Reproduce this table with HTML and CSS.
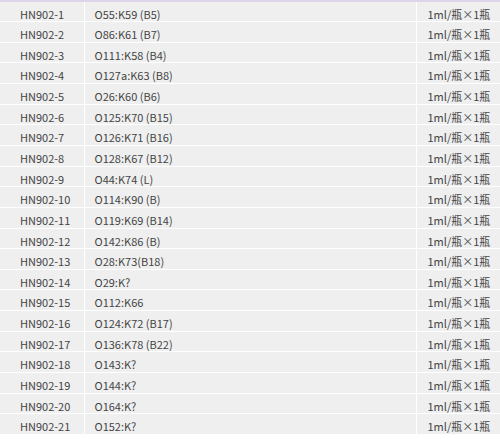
FILE: index.html
```html
<!DOCTYPE html>
<html lang="zh-CN">
<head>
    <meta charset="UTF-8">
    <meta name="viewport" content="width=device-width, initial-scale=1.0">
    <title>HN902 血清</title>
    <link rel="stylesheet" href="styles.css">
</head>
<body>
    <table class="serum-table">
        <colgroup>
            <col class="col-code">
            <col class="col-type">
            <col class="col-spec">
        </colgroup>
        <tbody>
            <tr><td>HN902-1</td><td>O55:K59 (B5)</td><td class="spec">1ml/瓶×1瓶</td></tr>
            <tr><td>HN902-2</td><td>O86:K61 (B7)</td><td class="spec">1ml/瓶×1瓶</td></tr>
            <tr><td>HN902-3</td><td>O111:K58 (B4)</td><td class="spec">1ml/瓶×1瓶</td></tr>
            <tr><td>HN902-4</td><td>O127a:K63 (B8)</td><td class="spec">1ml/瓶×1瓶</td></tr>
            <tr><td>HN902-5</td><td>O26:K60 (B6)</td><td class="spec">1ml/瓶×1瓶</td></tr>
            <tr><td>HN902-6</td><td>O125:K70 (B15)</td><td class="spec">1ml/瓶×1瓶</td></tr>
            <tr><td>HN902-7</td><td>O126:K71 (B16)</td><td class="spec">1ml/瓶×1瓶</td></tr>
            <tr><td>HN902-8</td><td>O128:K67 (B12)</td><td class="spec">1ml/瓶×1瓶</td></tr>
            <tr><td>HN902-9</td><td>O44:K74 (L)</td><td class="spec">1ml/瓶×1瓶</td></tr>
            <tr><td>HN902-10</td><td>O114:K90 (B)</td><td class="spec">1ml/瓶×1瓶</td></tr>
            <tr><td>HN902-11</td><td>O119:K69 (B14)</td><td class="spec">1ml/瓶×1瓶</td></tr>
            <tr><td>HN902-12</td><td>O142:K86 (B)</td><td class="spec">1ml/瓶×1瓶</td></tr>
            <tr><td>HN902-13</td><td>O28:K73(B18)</td><td class="spec">1ml/瓶×1瓶</td></tr>
            <tr><td>HN902-14</td><td>O29:K?</td><td class="spec">1ml/瓶×1瓶</td></tr>
            <tr><td>HN902-15</td><td>O112:K66</td><td class="spec">1ml/瓶×1瓶</td></tr>
            <tr><td>HN902-16</td><td>O124:K72 (B17)</td><td class="spec">1ml/瓶×1瓶</td></tr>
            <tr><td>HN902-17</td><td>O136:K78 (B22)</td><td class="spec">1ml/瓶×1瓶</td></tr>
            <tr><td>HN902-18</td><td>O143:K?</td><td class="spec">1ml/瓶×1瓶</td></tr>
            <tr><td>HN902-19</td><td>O144:K?</td><td class="spec">1ml/瓶×1瓶</td></tr>
            <tr><td>HN902-20</td><td>O164:K?</td><td class="spec">1ml/瓶×1瓶</td></tr>
            <tr><td>HN902-21</td><td>O152:K?</td><td class="spec">1ml/瓶×1瓶</td></tr>
        </tbody>
    </table>
</body>
</html>
```

FILE: styles.css
```css
body {
    margin: 0;
    background: #ffffff;
    font-family: "Noto Sans CJK SC", "Noto Sans", sans-serif;
    font-size: 11px;
    color: #444444;
}

.serum-table {
    width: 500px;
    border-collapse: collapse;
    table-layout: fixed;
    border-top: 2px solid #dcd5ea;
}

.col-code {
    width: 84px;
}
.col-spec {
    width: 84px;
}

.serum-table td {
    height: 20.65px;
    padding: 6px 0 0 10px;
    line-height: 13px;
    background: #efefef;
    border: 1px solid #ffffff;
    border-top: none;
    vertical-align: top;
    white-space: nowrap;
    box-sizing: border-box;
}

.serum-table td:first-child {
    padding-left: 20px;
    border-left: none;
}

.serum-table td.spec {
    padding-left: 11px;
    border-right: none;
}
```
